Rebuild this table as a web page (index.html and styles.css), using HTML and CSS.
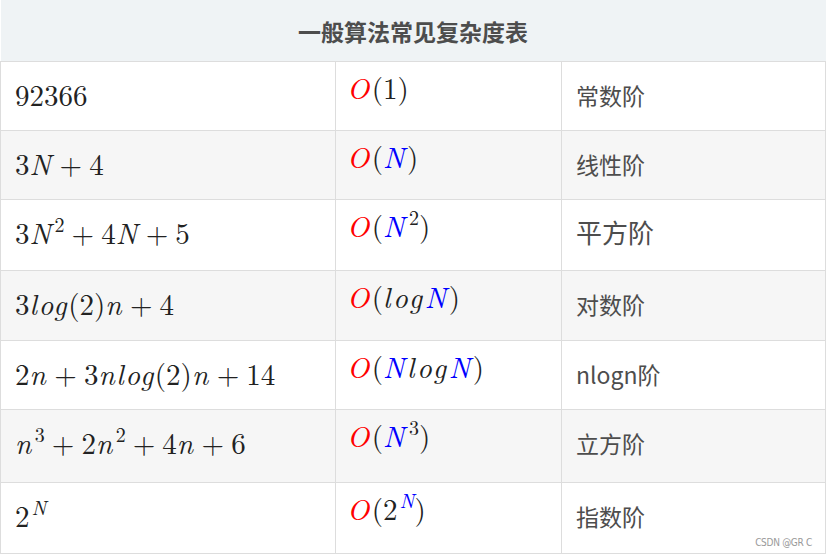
FILE: index.html
```html
<!DOCTYPE html>
<html lang="zh">
<head>
<meta charset="utf-8">
<link rel="stylesheet" href="styles.css">
</head>
<body>
<div class="wrap">
  <table class="cx">
    <colgroup>
      <col class="w1">
      <col class="w2">
      <col class="w3">
    </colgroup>
    <thead>
      <tr><th colspan="3">一般算法常见复杂度表</th></tr>
    </thead>
    <tbody>
      <tr>
        <td class="c1"><span class="m">92366</span></td>
        <td class="c2"><span class="m"><i class="r">O</i>(1)</span></td>
        <td class="c3">常数阶</td>
      </tr>
      <tr>
        <td class="c1"><span class="m">3<i>N</i><b class="op">+</b>4</span></td>
        <td class="c2"><span class="m"><i class="r">O</i>(<i class="b">N</i>)</span></td>
        <td class="c3">线性阶</td>
      </tr>
      <tr>
        <td class="c1"><span class="m">3<i>N</i><sup>2</sup><b class="op">+</b>4<i>N</i><b class="op">+</b>5</span></td>
        <td class="c2"><span class="m"><i class="r">O</i>(<i class="b">N</i><sup>2</sup>)</span></td>
        <td class="c3 big">平方阶</td>
      </tr>
      <tr>
        <td class="c1"><span class="m">3<i>log</i>(2)<i>n</i><b class="op">+</b>4</span></td>
        <td class="c2"><span class="m"><i class="r">O</i>(<i>log</i><i class="b">N</i>)</span></td>
        <td class="c3">对数阶</td>
      </tr>
      <tr>
        <td class="c1"><span class="m">2<i>n</i><b class="op">+</b>3<i>nlog</i>(2)<i>n</i><b class="op">+</b>14</span></td>
        <td class="c2"><span class="m"><i class="r">O</i>(<i class="b">N</i><i>log</i><i class="b">N</i>)</span></td>
        <td class="c3">nlogn阶</td>
      </tr>
      <tr>
        <td class="c1"><span class="m"><i>n</i><sup>3</sup><b class="op">+</b>2<i>n</i><sup>2</sup><b class="op">+</b>4<i>n</i><b class="op">+</b>6</span></td>
        <td class="c2"><span class="m"><i class="r">O</i>(<i class="b">N</i><sup>3</sup>)</span></td>
        <td class="c3">立方阶</td>
      </tr>
      <tr>
        <td class="c1"><span class="m">2<sup><i>N</i></sup></span></td>
        <td class="c2"><span class="m"><i class="r">O</i>(2<sup><i class="b">N</i></sup>)</span></td>
        <td class="c3">指数阶</td>
      </tr>
    </tbody>
  </table>
  <span class="wm">CSDN @GR C</span>
</div>
</body>
</html>
```
FILE: styles.css
```css
html, body {
  margin: 0;
  padding: 0;
  background: #ffffff;
}
.wrap {
  position: relative;
  width: 828px;
  height: 555px;
}
.cx {
  border-collapse: collapse;
  width: 825px;
  table-layout: fixed;
}
.w1 { width: 335px; }
.w2 { width: 226px; }
.w3 { width: 264px; }
.cx th {
  height: 61px;
  padding: 0;
  background: #eff3f5;
  border-bottom: 1px solid #dddddd;
  font-family: "Noto Sans CJK SC", sans-serif;
  font-weight: bold;
  font-size: 23px;
  color: #4d4d4d;
  text-align: center;
  vertical-align: middle;
}
.cx td {
  border: 1px solid #dddddd;
  padding: 0;
  vertical-align: top;
  box-sizing: border-box;
}
.cx tbody tr:nth-child(even) td {
  background: #f6f6f6;
}
.cx tbody tr:nth-child(1) td { height: 69px; }
.cx tbody tr:nth-child(2) td { height: 69px; }
.cx tbody tr:nth-child(3) td { height: 71px; }
.cx tbody tr:nth-child(4) td { height: 70px; }
.cx tbody tr:nth-child(5) td { height: 69px; }
.cx tbody tr:nth-child(6) td { height: 73px; }
.cx tbody tr:nth-child(7) td { height: 71px; }
.c1 { padding-left: 14px !important; }
.c2 { padding-left: 11px !important; }
.c3 {
  padding-left: 14px !important;
  font-family: "Noto Sans CJK SC", sans-serif;
  font-size: 23px;
  color: #4d4d4d;
  line-height: 30px;
  padding-top: 18px !important;
}
.c3.big {
  font-size: 26px;
  padding-top: 17px !important;
}
.m {
  display: inline-block;
  font-family: "Latin Modern Roman", "CMU Serif", "Liberation Serif", serif;
  font-size: 29px;
  line-height: 32px;
  color: #222222;
  white-space: nowrap;
}
.c1 .m { padding-top: 16px; }
.c2 .m { padding-top: 9px; }
.m i {
  font-style: italic;
  letter-spacing: 1.5px;
}
.c2 .m i { letter-spacing: 2.5px; }
.m .op {
  font-weight: normal;
  margin: 0 7px;
}
.m sup {
  font-size: 20px;
  line-height: 0;
  vertical-align: 12px;
  margin-left: 2px;
}
.m sup i, .c2 .m sup i { letter-spacing: 0; }
.r { color: #ff0000; }
.b { color: #0000ff; }
.wm {
  position: absolute;
  right: 16px;
  bottom: 7px;
  font-family: "DejaVu Sans", sans-serif;
  font-stretch: condensed;
  font-size: 10px;
  color: #999999;
  letter-spacing: -0.3px;
}
```
